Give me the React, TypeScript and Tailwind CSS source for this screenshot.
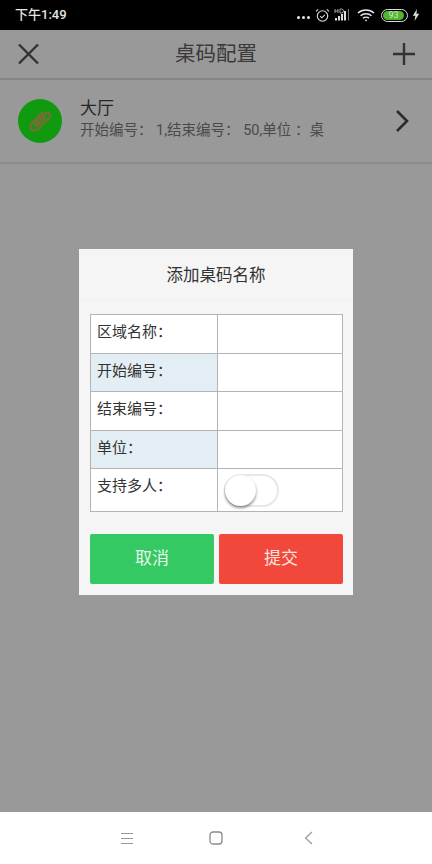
const FONT = "font-['Roboto','Noto_Sans_CJK_SC',sans-serif]";

const FIELDS = [
  { label: '区域名称：', tint: false },
  { label: '开始编号：', tint: true },
  { label: '结束编号：', tint: false },
  { label: '单位：', tint: true },
];

function StatusIcons() {
  return (
    <div className="flex items-center">
      <div className="flex gap-[2px] mr-[5px] mt-[5px]">
        <span className="w-[3px] h-[3px] rounded-full bg-[#e8e8e8]" />
        <span className="w-[3px] h-[3px] rounded-full bg-[#e8e8e8]" />
        <span className="w-[3px] h-[3px] rounded-full bg-[#e8e8e8]" />
      </div>
      <svg width="15" height="15" viewBox="0 0 15 15" fill="none" stroke="#ddd" strokeWidth="1.1" className="mr-[4px]">
        <circle cx="7.5" cy="8" r="5.2" />
        <path d="M5.2 8.2l1.7 1.6 2.9-3M1 3.4L3.2 1.4M14 3.4L11.8 1.4" />
      </svg>
      <svg width="17" height="14" viewBox="0 0 17 14" fill="#ddd" className="mr-[6px]">
        <rect x="1" y="10" width="2" height="2.5" />
        <rect x="4" y="8" width="2" height="4.5" />
        <rect x="7" y="6" width="2" height="6.5" />
        <rect x="10" y="3" width="2" height="9.5" />
        <rect x="14" y="1" width="1" height="11.5" fill="#777" />
        <path d="M1 1v4M1 3h3M4 1v4M6 1v4h1.5a2 2 0 000-4z" stroke="#ddd" strokeWidth="0.7" fill="none" />
      </svg>
      <svg width="18" height="14" viewBox="0 0 18 14" fill="none" stroke="#e8e8e8" strokeWidth="1.5" className="mr-[6px]">
        <path d="M1 5c4.500-4 11.500-4 16 0M3.500 7.700c3-2.600 8-2.600 11 0M6 10.200c1.600-1.300 4.400-1.300 6 0" />
        <circle cx="9" cy="12.300" r="0.9" fill="#e8e8e8" stroke="none" />
      </svg>
      <div className="w-[27px] h-[13px] rounded-full border border-[#ddd] p-[1px] mr-[4px]">
        <div className="w-[21px] h-full rounded-full bg-[#4fb52c] flex items-center justify-center text-[9px] leading-none text-[#d5e8c8]">
          93
        </div>
      </div>
      <svg width="8" height="12" viewBox="0 0 8 12" fill="#e0e0e0">
        <path d="M5 0L0.800 6.800h2.600L2.600 12 7.200 4.800H4.400z" />
      </svg>
    </div>
  );
}

function ClipBadge() {
  return (
    <div className="w-[44px] h-[44px] rounded-full bg-[#109a10] flex items-center justify-center">
      <svg width="32" height="32" viewBox="0 0 30 30" fill="none" stroke="#7f6a38" strokeWidth="2" strokeLinecap="round">
        <g transform="rotate(45 15 15)">
          <path d="M11 8v14a4 4 0 008 0V6.500a2.800 2.800 0 00-5.600 0V20a1.300 1.300 0 002.600 0V9" />
        </g>
      </svg>
    </div>
  );
}

function Dialog() {
  return (
    <div className="absolute left-[79px] top-[249px] w-[274px] h-[346px] bg-[#f5f5f5] flex flex-col">
      <div className="h-[52px] pt-[3px] flex items-center justify-center text-[16.500px] text-[#333] border-b border-[#f1f1f1]">
        添加桌码名称
      </div>
      <div className="pl-[11px] pr-[10px] pt-[13px]">
        <div className="border border-[#b4b4b4] bg-white">
          {FIELDS.map((field) => (
            <div key={field.label} className="flex h-[38.500px] border-b border-[#b4b4b4]">
              <div
                className={`w-[127px] border-r border-[#b4b4b4] pl-[6px] pb-[3px] flex items-center text-[15px] text-[#333] ${
                  field.tint ? 'bg-[#e2eef3]' : 'bg-white'
                }`}
              >
                {field.label}
              </div>
              <div className="flex-1" />
            </div>
          ))}
          <div className="flex h-[42px]">
            <div className="w-[127px] border-r border-[#b4b4b4] pl-[6px] pb-[8px] flex items-center text-[15px] text-[#333]">
              支持多人：
            </div>
            <div className="flex-1 flex items-center pl-[6px]">
              <div className="w-[55px] h-[33px] rounded-full border-2 border-[#e8e8e8] bg-white relative">
                <div className="absolute left-[-1px] top-[-1px] w-[31px] h-[31px] rounded-full bg-white shadow-[0_2px_3px_rgba(0,0,0,0.45)]" />
              </div>
            </div>
          </div>
        </div>
        <div className="flex justify-between mt-[22px]">
          <button type="button" className="w-[124px] h-[50px] rounded-[2px] bg-[#34c963] text-[#e6f7ea] text-[17px]">
            取消
          </button>
          <button type="button" className="w-[124px] h-[50px] rounded-[2px] bg-[#f2483b] text-[#fbe3de] text-[17px]">
            提交
          </button>
        </div>
      </div>
    </div>
  );
}

export default function App() {
  return (
    <div className={`relative w-[432px] h-[864px] overflow-hidden flex flex-col bg-[#999999] ${FONT}`}>
      <div className="h-[30px] bg-black flex items-center justify-between pl-[15px] pr-[12px]">
        <span className="text-[13px] font-medium text-[#e4e4e4]">下午1:49</span>
        <StatusIcons />
      </div>
      <div className="h-[50px] flex items-center justify-between pl-[16px] pr-[16px] border-b-2 border-[#868686]">
        <svg width="24" height="24" viewBox="0 0 24 24" fill="none" stroke="#333" strokeWidth="2.400">
          <path d="M3 2.500l19 19M22 2.500l-19 19" />
        </svg>
        <span className="text-[20.500px] text-[#3a3a3a]">桌码配置</span>
        <svg width="24" height="24" viewBox="0 0 24 24" fill="none" stroke="#333" strokeWidth="2.400">
          <path d="M12 1v22M1 12h22" />
        </svg>
      </div>
      <div className="h-[84px] flex items-center pl-[18px] pr-[23px] border-b-2 border-[#8c8c8c]">
        <ClipBadge />
        <div className="ml-[18px] flex-1">
          <div className="text-[17px] leading-[20px] text-[#262626]">大厅</div>
          <div className="text-[14.500px] leading-[26px] text-[#4a4a4a]">开始编号： 1,结束编号： 50,单位 ：桌</div>
        </div>
        <svg width="14" height="24" viewBox="0 0 14 24" fill="none" stroke="#2b2b2b" strokeWidth="2.600">
          <path d="M2 2l10 10L2 22" />
        </svg>
      </div>
      <div className="flex-1" />
      <div className="h-[52px] bg-white flex items-center justify-center">
        <svg width="14" height="13" viewBox="0 0 14 13" fill="none" stroke="#999" strokeWidth="1.200">
          <path d="M1 1.500h12M1 6.500h12M1 11.500h12" />
        </svg>
        <svg width="14" height="14" viewBox="0 0 14 14" fill="none" stroke="#8a8a8a" strokeWidth="1.300" className="ml-[75px] mr-[81px]">
          <rect x="1" y="1" width="12" height="12" rx="3" />
        </svg>
        <svg width="9" height="14" viewBox="0 0 9 14" fill="none" stroke="#999" strokeWidth="1.200">
          <path d="M8 1L1.500 7 8 13" />
        </svg>
      </div>
      <Dialog />
    </div>
  );
}
